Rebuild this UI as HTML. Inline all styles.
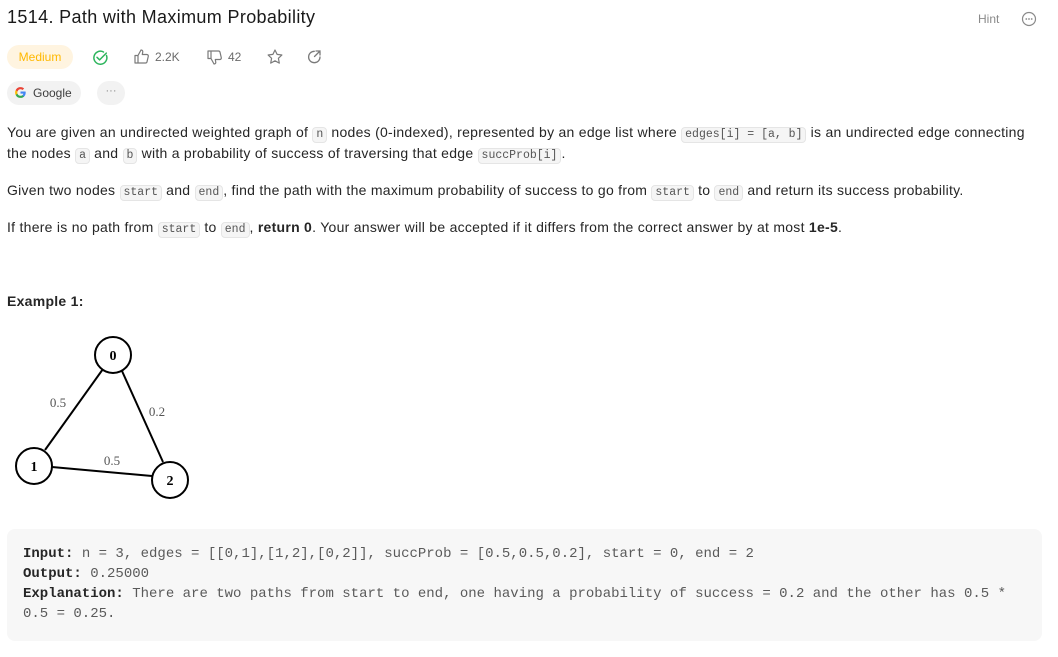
<!DOCTYPE html>
<html><head><meta charset="utf-8"><style>
*{margin:0;padding:0;box-sizing:border-box}
body{width:1058px;height:657px;background:#fff;font-family:"Liberation Sans",sans-serif;color:#262626;overflow:hidden;position:relative}
.title{position:absolute;left:7px;top:7px;font-size:18px;font-weight:500;color:#1a1a1a;letter-spacing:.35px}
.hint{position:absolute;left:978px;top:12px;font-size:12px;color:#8a8a8a}
.tag{position:absolute;border-radius:14px;font-size:12px}
.p{position:absolute;left:7px;font-size:14px;line-height:21px;color:#262626;white-space:nowrap;letter-spacing:.27px}
code{font-family:"Liberation Mono",monospace;font-size:11.5px;line-height:14px;display:inline-block;background:#f5f5f5;border:1px solid #e5e5e5;border-radius:4px;padding:0 3px;color:#555;letter-spacing:0}
.ex{position:absolute;left:7px;top:529px;width:1035px;height:112px;background:#f7f7f7;border-radius:8px;padding:15px 16px;font-family:"Liberation Mono",monospace;font-size:14px;line-height:20px;color:#5a5a5a;white-space:pre}
.ex b{color:#262626}
.st{position:absolute;font-size:12px;color:#6b6b6b}
</style></head><body>
<div class="title">1514. Path with Maximum Probability</div>
<div class="hint">Hint</div>
<svg style="position:absolute;left:1021px;top:11px" width="16" height="16" viewBox="0 0 16 16"><circle cx="8" cy="8" r="6.5" fill="none" stroke="#8a8a8a" stroke-width="1.2"/><circle cx="5.3" cy="8" r=".9" fill="#8a8a8a"/><circle cx="8" cy="8" r=".9" fill="#8a8a8a"/><circle cx="10.7" cy="8" r=".9" fill="#8a8a8a"/></svg>

<div class="tag" style="left:7px;top:45px;width:66px;height:24px;background:#fff4e0;color:#ffb800;text-align:center;line-height:24px">Medium</div>
<svg style="position:absolute;left:92px;top:49px" width="17" height="17" viewBox="0 0 17 17"><path d="M14.5 6.5A6.5 6.5 0 1 1 11.5 3" fill="none" stroke="#2db55d" stroke-width="1.5" stroke-linecap="round"/><path d="M5 8.3l2.6 2.6 6.7-6.8" fill="none" stroke="#2db55d" stroke-width="1.5" stroke-linecap="round" stroke-linejoin="round"/></svg>
<svg style="position:absolute;left:133px;top:48px" width="17" height="17" viewBox="0 0 17 17"><path d="M2 7.5h3v7.5H2zM5 7.5l3-5.5c1.5 0 2 1 1.7 2.3L9.3 6.5h4.5c1 0 1.7.9 1.5 1.8l-1.3 5.5c-.2.7-.8 1.2-1.5 1.2H5" fill="none" stroke="#7a7a7a" stroke-width="1.2" stroke-linejoin="round"/></svg>
<div class="st" style="left:155px;top:50px">2.2K</div>
<svg style="position:absolute;left:206px;top:49px" width="17" height="17" viewBox="0 0 17 17"><path d="M2 2h3v7.5H2zM5 9.5l3 5.5c1.5 0 2-1 1.7-2.3L9.3 10.5h4.5c1 0 1.7-.9 1.5-1.8L14 3.2C13.8 2.5 13.2 2 12.5 2H5" fill="none" stroke="#7a7a7a" stroke-width="1.2" stroke-linejoin="round"/></svg>
<div class="st" style="left:228px;top:50px">42</div>
<svg style="position:absolute;left:266px;top:48px" width="18" height="18" viewBox="0 0 18 18"><path d="M9 2l2.1 4.4 4.8.6-3.5 3.3.9 4.8L9 12.8l-4.3 2.3.9-4.8L2.1 7l4.8-.6z" fill="none" stroke="#7a7a7a" stroke-width="1.2" stroke-linejoin="round"/></svg>
<svg style="position:absolute;left:306px;top:48px" width="17" height="17" viewBox="0 0 17 17"><path d="M14 9a5.7 5.7 0 1 1-5.7-5.7" fill="none" stroke="#7a7a7a" stroke-width="1.3" stroke-linecap="round"/><path d="M10 3h4v4M14 3L8.5 8.5" fill="none" stroke="#7a7a7a" stroke-width="1.3" stroke-linecap="round"/></svg>

<div class="tag" style="left:7px;top:81px;width:74px;height:24px;background:#f2f2f2;color:#3d3d3d;line-height:24px;padding-left:26px">Google</div>
<svg style="position:absolute;left:14px;top:86px" width="13" height="13" viewBox="0 0 24 24"><path d="M21.6 12.2c0-.7-.1-1.4-.2-2H12v3.8h5.4a4.6 4.6 0 0 1-2 3v2.5h3.2c1.9-1.7 3-4.3 3-7.3z" fill="#4285f4"/><path d="M12 22c2.7 0 5-.9 6.6-2.4l-3.2-2.5c-.9.6-2 1-3.4 1-2.6 0-4.8-1.800-5.6-4.1H3.1v2.6A10 10 0 0 0 12 22z" fill="#34a853"/><path d="M6.4 14a6 6 0 0 1 0-3.9V7.5H3.1a10 10 0 0 0 0 9z" fill="#fbbc05"/><path d="M12 5.9c1.5 0 2.8.5 3.8 1.5l2.9-2.9A10 10 0 0 0 3.1 7.5l3.3 2.6C7.2 7.7 9.4 5.9 12 5.9z" fill="#ea4335"/></svg>
<div class="tag" style="left:97px;top:81px;width:28px;height:24px;background:#f2f2f2;color:#8a8a8a;text-align:center;line-height:20px;font-size:11px">···</div>

<div class="p" style="top:122px">You are given an undirected weighted graph of <code>n</code> nodes (0-indexed), represented by an edge list where <code>edges[i] = [a, b]</code> is an undirected edge connecting<br>the nodes <code>a</code> and <code>b</code> with a probability of success of traversing that edge <code>succProb[i]</code>.</div>
<div class="p" style="top:180px">Given two nodes <code>start</code> and <code>end</code>, find the path with the maximum probability of success to go from <code>start</code> to <code>end</code> and return its success probability.</div>
<div class="p" style="top:217px">If there is no path from <code>start</code> to <code>end</code>, <b>return 0</b>. Your answer will be accepted if it differs from the correct answer by at most <b>1e-5</b>.</div>
<div class="p" style="top:291px;font-weight:bold">Example 1:</div>

<svg style="position:absolute;left:0;top:320px" width="220" height="180" viewBox="0 0 220 180" font-family="Liberation Serif,serif">
<g stroke="#000" stroke-width="2" fill="none">
<line x1="103" y1="49" x2="45" y2="130"/>
<line x1="122" y1="51" x2="163" y2="142"/>
<line x1="52" y1="147" x2="152" y2="156"/>
<circle cx="113" cy="35" r="18" fill="#fff"/>
<circle cx="34" cy="146" r="18" fill="#fff"/>
<circle cx="170" cy="160" r="18" fill="#fff"/>
</g>
<g font-size="14" font-weight="bold" text-anchor="middle"><text x="113" y="40">0</text><text x="34" y="151">1</text><text x="170" y="165">2</text></g>
<g font-size="13" fill="#555" text-anchor="middle"><text x="58" y="87">0.5</text><text x="157" y="96">0.2</text><text x="112" y="145">0.5</text></g>
</svg>

<div class="ex"><b>Input:</b> n = 3, edges = [[0,1],[1,2],[0,2]], succProb = [0.5,0.5,0.2], start = 0, end = 2
<b>Output:</b> 0.25000
<b>Explanation:</b> There are two paths from start to end, one having a probability of success = 0.2 and the other has 0.5 *
0.5 = 0.25.</div>
</body></html>
